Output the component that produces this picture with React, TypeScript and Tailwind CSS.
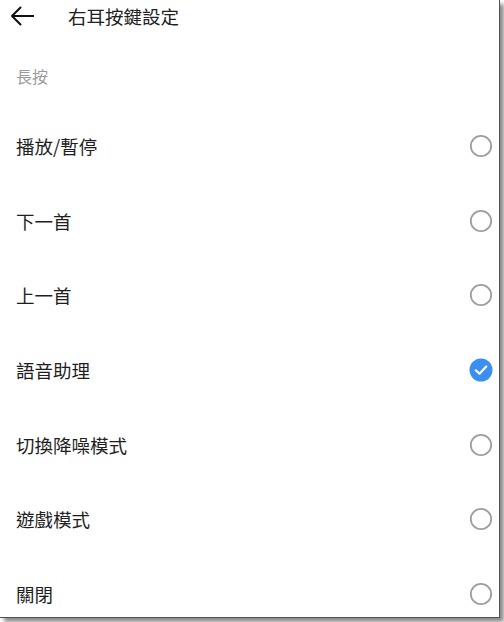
import React from "react";

const items = ["播放/暫停", "下一首", "上一首", "語音助理", "切換降噪模式", "遊戲模式", "關閉"];
const selected = 3;

function Radio({ on }: { on: boolean }) {
  if (on) {
    return (
      <svg width="24" height="24" viewBox="0 0 24 24">
        <circle cx="12" cy="12" r="11.5" fill="#3b8ff0" />
        <path d="M6.8 12.3 L10.5 15.8 L17.3 8.6" fill="none" stroke="#fff" strokeWidth="2.2" strokeLinecap="round" strokeLinejoin="round" />
      </svg>
    );
  }
  return (
    <svg width="24" height="24" viewBox="0 0 24 24">
      <circle cx="12" cy="12" r="10.2" fill="none" stroke="#9e9e9e" strokeWidth="1.8" />
    </svg>
  );
}

export default function App() {
  return (
    <div className="w-[504px] h-[622px] bg-white" style={{ fontFamily: '"Noto Sans CJK TC", "Noto Sans", sans-serif' }}>
      <div className="w-[500px] h-[618px] bg-white border-r border-b border-[#505050] shadow-[4px_4px_4px_rgba(0,0,0,0.45)] overflow-hidden">
        <div className="h-[32px] flex items-center">
          <div className="w-[68px] flex items-center pl-[10px]">
            <svg width="24" height="20" viewBox="0 0 24 20">
              <path d="M23.5 10 H2 M10.5 1.5 L2 10 L10.5 18.5" fill="none" stroke="#111" strokeWidth="2" strokeLinecap="round" strokeLinejoin="round" />
            </svg>
          </div>
          <div className="text-[18.5px] leading-[24px] text-[#212121]">右耳按鍵設定</div>
        </div>
        <div className="h-[76.67px] pt-[32px] pl-[16px] text-[16px] leading-[24px] text-[#9a9a9a]">長按</div>
        <div className="flex flex-col">
          {items.map((t, i) => (
            <div key={t} className="h-[74.67px] flex items-center justify-between pl-[16px] pr-[6px] shrink-0">
              <span className="text-[18.5px] leading-[24px] text-[#1e1e1e]">{t}</span>
              <Radio on={i === selected} />
            </div>
          ))}
        </div>
      </div>
    </div>
  );
}
